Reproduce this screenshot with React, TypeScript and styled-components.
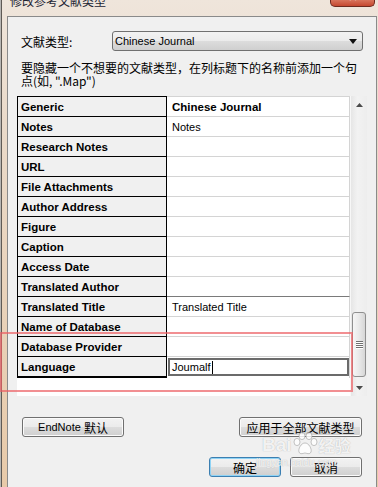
import React from 'react'
import styled, { createGlobalStyle } from 'styled-components'

const UI = `"Liberation Sans", "Noto Sans CJK SC", sans-serif`
const CJK = `"Noto Sans CJK SC", "Liberation Sans", sans-serif`

const GlobalStyle = createGlobalStyle`
  html, body {
    margin: 0;
    padding: 0;
  }
  body {
    width: 378px;
    height: 487px;
    overflow: hidden;
    background: #c4c0bb;
    font-family: ${UI};
  }
`

type Field = {
  name: string
  value?: string
  bold?: boolean
  darkTop?: boolean
  editing?: string
}

const fields: Field[] = [
  { name: 'Generic', value: 'Chinese Journal', bold: true },
  { name: 'Notes', value: 'Notes' },
  { name: 'Research Notes' },
  { name: 'URL' },
  { name: 'File Attachments' },
  { name: 'Author Address' },
  { name: 'Figure' },
  { name: 'Caption' },
  { name: 'Access Date' },
  { name: 'Translated Author' },
  { name: 'Translated Title', value: 'Translated Title', darkTop: true },
  { name: 'Name of Database' },
  { name: 'Database Provider' },
  { name: 'Language', editing: 'Joumalf' },
]

export default function App() {
  return (
    <Screen>
      <GlobalStyle />
      <Backdrop />
      <Dialog>
        <TitleBar>
          <Title>修改参考文献类型</Title>
          <CloseBtn>
            <CloseGlyph>✕</CloseGlyph>
          </CloseBtn>
        </TitleBar>
        <FrameRow>
          <Body>
            <TopSection>
              <TypeRow>
                <Label>文献类型:</Label>
                <Select>
                  <span>Chinese Journal</span>
                  <svg width="8" height="5" viewBox="0 0 8 5">
                    <polygon points="0,0 8,0 4,5" fill="#111" />
                  </svg>
                </Select>
              </TypeRow>
              <Hint>
                要隐藏一个不想要的文献类型，在列标题下的名称前添加一个句
                {'点(如, ".Map")'}
              </Hint>
            </TopSection>

            <Grid>
              <RowsArea>
                {fields.map((f, i) => {
                  const last = i === fields.length - 1
                  return (
                    <Row key={f.name} last={last}>
                      <NameCell last={last}>{f.name}</NameCell>
                      <ValueCell bold={f.bold} darkTop={f.darkTop} editing={!!f.editing}>
                        {f.editing ? (
                          <EditBox>
                            {f.editing}
                            <Caret />
                          </EditBox>
                        ) : (
                          f.value
                        )}
                      </ValueCell>
                    </Row>
                  )
                })}
              </RowsArea>
              <ScrollBar>
                <ScrollArrow>
                  <svg width="7" height="4" viewBox="0 0 7 4">
                    <polygon points="0,4 7,4 3.5,0" fill="#4a4a4a" />
                  </svg>
                </ScrollArrow>
                <Track>
                  <Thumb>
                    <Grip />
                    <Grip />
                    <Grip />
                    <Grip />
                  </Thumb>
                </Track>
                <ScrollArrow>
                  <svg width="7" height="4" viewBox="0 0 7 4">
                    <polygon points="0,0 7,0 3.5,4" fill="#4a4a4a" />
                  </svg>
                </ScrollArrow>
              </ScrollBar>
            </Grid>

            <ButtonRow>
              <Button width={102}>
                EndNote <Cjk>默认</Cjk>
              </Button>
              <Button width={123}>
                <Cjk>应用于全部文献类型</Cjk>
              </Button>
            </ButtonRow>
            <ButtonRow right>
              <Button width={72} focused>
                <Cjk>确定</Cjk>
              </Button>
              <Button width={72}>
                <Cjk>取消</Cjk>
              </Button>
            </ButtonRow>
          </Body>
        </FrameRow>
      </Dialog>

      <Annotation />

      <Watermark>
        <WmTop>
          <span>Bai</span>
          <svg width="26" height="24" viewBox="0 0 26 24">
            <g fill="rgba(255,255,255,0.8)" stroke="rgba(150,150,150,0.55)" strokeWidth="1">
              <ellipse cx="5" cy="10" rx="3" ry="3.6" />
              <ellipse cx="10" cy="4" rx="3" ry="3.6" />
              <ellipse cx="17" cy="4" rx="3" ry="3.6" />
              <ellipse cx="22" cy="10" rx="3" ry="3.6" />
              <path d="M13 11 C9 11 6 17 7 20 C8 23 12 21 13 21 C14 21 18 23 19 20 C20 17 17 11 13 11 Z" />
            </g>
          </svg>
          <WmCjk>经验</WmCjk>
        </WmTop>
        <WmUrl>jingyan.baidu.com</WmUrl>
      </Watermark>
    </Screen>
  )
}

const Screen = styled.div`
  position: relative;
  display: flex;
  width: 378px;
  height: 487px;
  overflow: hidden;
`

const Backdrop = styled.div`
  width: 2px;
  background: #b8b6b3;
`

const Dialog = styled.div`
  flex: 1;
  display: flex;
  flex-direction: column;
  border-left: 1px solid #5f5a55;
  padding-right: 1px;
  background: linear-gradient(to bottom, #efe5db 0%, #eadaca 25%, #e8caa9 100%);
`

const TitleBar = styled.div`
  height: 16px;
  display: flex;
  justify-content: space-between;
  align-items: flex-start;
  overflow: hidden;
  padding-left: 8px;
`

const Title = styled.div`
  margin-top: -5px;
  font-family: ${CJK};
  font-size: 12px;
  line-height: 12px;
  color: #1c2433;
`

const CloseBtn = styled.div`
  width: 45px;
  height: 7px;
  margin-right: 2px;
  box-sizing: border-box;
  border: 1px solid #6e2a1e;
  border-top: none;
  border-radius: 0 0 5px 5px;
  background: linear-gradient(to bottom, #d8745c, #c5472f);
  display: flex;
  justify-content: center;
  overflow: hidden;
`

const CloseGlyph = styled.span`
  margin-top: -9px;
  color: #fff;
  font-size: 12px;
  line-height: 12px;
  font-weight: bold;
`

const FrameRow = styled.div`
  flex: 1;
  display: flex;
  padding-left: 5px;
  min-height: 0;
`

const Body = styled.div`
  flex: 1;
  display: flex;
  flex-direction: column;
  background: #f0f0f0;
  border: 1px solid #8a8a8a;
  border-bottom: none;
  padding: 14px 9px 0 9px;
`

const TopSection = styled.div`
  padding: 0 4px;
`

const TypeRow = styled.div`
  display: flex;
  align-items: center;
  height: 20px;
`

const Label = styled.div`
  width: 91px;
  font-family: ${CJK};
  font-size: 12px;
  color: #000;
`

const Select = styled.div`
  flex: 1;
  height: 20px;
  box-sizing: border-box;
  border: 1px solid #707070;
  border-radius: 3px;
  background: linear-gradient(to bottom, #f2f2f2 0%, #ebebeb 50%, #dddddd 50%, #cfcfcf 100%);
  display: flex;
  align-items: center;
  justify-content: space-between;
  padding: 0 5px 0 2px;
  font-size: 11px;
  color: #000;
`

const Hint = styled.div`
  margin-top: 10px;
  font-family: ${CJK};
  font-size: 12px;
  line-height: 13px;
  color: #000;
`

const Grid = styled.div`
  margin-top: 9px;
  display: flex;
  height: 300px;
`

const RowsArea = styled.div`
  width: 333px;
  background: #fff;
  display: flex;
  flex-direction: column;
`

const Row = styled.div<{ last?: boolean }>`
  display: grid;
  grid-template-columns: 150px 1fr;
  height: ${(p) => (p.last ? 22 : 20)}px;
`

const NameCell = styled.div<{ last?: boolean }>`
  box-sizing: border-box;
  background: #f0f0f0;
  border: 1px solid #000;
  border-bottom: ${(p) => (p.last ? '2px solid #000' : 'none')};
  padding-left: 3px;
  display: flex;
  align-items: center;
  font-size: 11.5px;
  font-weight: bold;
  color: #000;
  white-space: nowrap;
`

const ValueCell = styled.div<{ bold?: boolean; darkTop?: boolean; editing?: boolean }>`
  box-sizing: border-box;
  border-top: 1px solid ${(p) => (p.darkTop ? '#7a7a7a' : '#d4d4d4')};
  border-right: 1px solid #d4d4d4;
  padding: ${(p) => (p.editing ? '1px 0 2px 1px' : '0 0 0 5px')};
  display: flex;
  align-items: ${(p) => (p.editing ? 'stretch' : 'center')};
  font-size: ${(p) => (p.bold ? 11.5 : 11)}px;
  font-weight: ${(p) => (p.bold ? 'bold' : 'normal')};
  color: #000;
  white-space: nowrap;
`

const EditBox = styled.div`
  flex: 1;
  box-sizing: border-box;
  border: 2px solid #6b6b6b;
  background: #fff;
  display: flex;
  align-items: center;
  padding-left: 2px;
  font-size: 11px;
  color: #000;
`

const Caret = styled.span`
  display: inline-block;
  width: 1px;
  height: 13px;
  margin-left: 1px;
  background: #000;
`

const ScrollBar = styled.div`
  width: 16px;
  display: flex;
  flex-direction: column;
  background: linear-gradient(to right, #e6e6e6 0%, #f2f2f2 40%, #ededed 100%);
  border-left: 1px solid #f7f7f7;
`

const ScrollArrow = styled.div`
  height: 17px;
  display: flex;
  align-items: center;
  justify-content: center;
`

const Track = styled.div`
  flex: 1;
  display: flex;
  flex-direction: column;
`

const Thumb = styled.div`
  margin: 199px 1px 0 1px;
  height: 65px;
  box-sizing: border-box;
  border: 1px solid #8f8f8f;
  border-radius: 3px;
  background: linear-gradient(to right, #f6f6f6 0%, #e9e9e9 50%, #d6d6d6 100%);
  display: flex;
  flex-direction: column;
  align-items: center;
  justify-content: center;
  gap: 1px;
`

const Grip = styled.div`
  width: 7px;
  height: 1px;
  background: #6f6f6f;
  box-shadow: 0 1px 0 #ffffff;
`

const ButtonRow = styled.div<{ right?: boolean }>`
  display: flex;
  justify-content: ${(p) => (p.right ? 'flex-end' : 'space-between')};
  gap: 9px;
  padding: 0 5px;
  margin-top: ${(p) => (p.right ? 20 : 21)}px;
`

const Button = styled.div<{ width: number; focused?: boolean }>`
  width: ${(p) => p.width}px;
  height: 20px;
  box-sizing: border-box;
  border: 1px solid ${(p) => (p.focused ? '#3c7fb1' : '#707070')};
  border-radius: 3px;
  box-shadow: ${(p) => (p.focused ? 'inset 0 0 0 1px #8fd3f5' : 'inset 0 0 0 1px #fbfbfb')};
  background: linear-gradient(to bottom, #f2f2f2 0%, #ebebeb 50%, #dddddd 50%, #cfcfcf 100%);
  display: flex;
  align-items: center;
  justify-content: center;
  font-size: 11px;
  color: #000;
  white-space: pre;
`

const Cjk = styled.span`
  font-family: ${CJK};
  font-size: 12px;
`

const Annotation = styled.div`
  position: absolute;
  left: 0;
  top: 332px;
  width: 353px;
  height: 60px;
  box-sizing: border-box;
  border: 2px solid rgba(236, 96, 100, 0.7);
  pointer-events: none;
`

const Watermark = styled.div`
  position: absolute;
  left: 256px;
  top: 432px;
  display: flex;
  flex-direction: column;
  align-items: flex-start;
  pointer-events: none;
  color: rgba(255, 255, 255, 0.85);
  text-shadow: 0 0 1px rgba(140, 140, 140, 0.7);
`

const WmTop = styled.div`
  display: flex;
  align-items: flex-end;
  gap: 0;
  font-family: ${UI};
  font-size: 19px;
  font-weight: bold;
  line-height: 22px;
  padding-left: 6px;
`

const WmCjk = styled.span`
  font-family: ${CJK};
  font-size: 16px;
  font-weight: bold;
  margin-left: 1px;
`

const WmUrl = styled.div`
  font-family: ${UI};
  font-size: 10px;
  line-height: 12px;
  margin-top: 1px;
`
